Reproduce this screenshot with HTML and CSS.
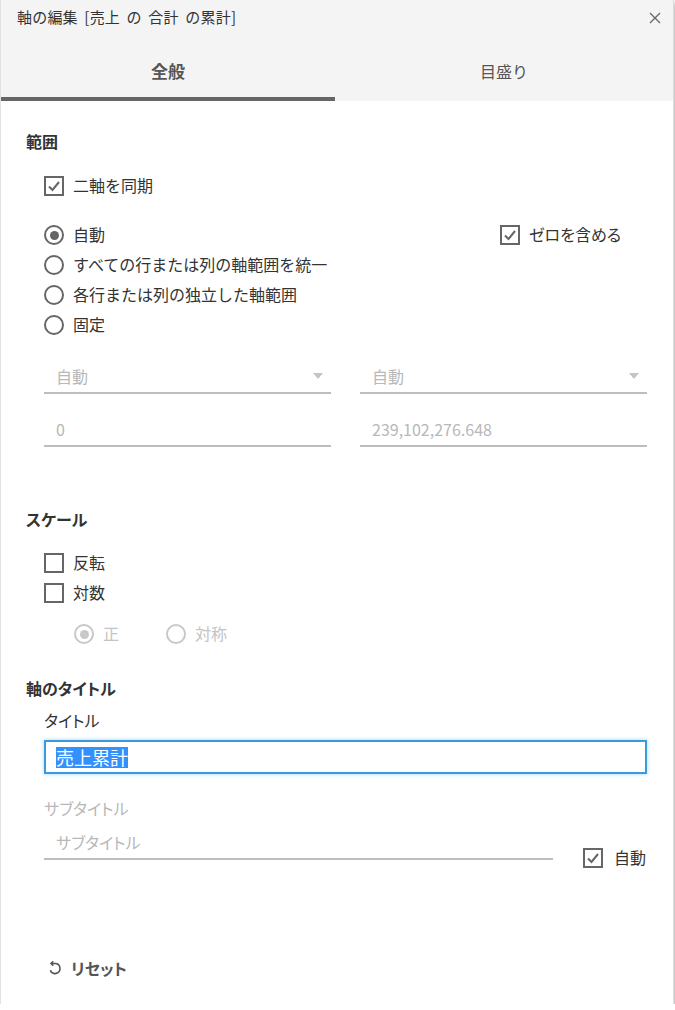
FILE: index.html
```html
<!DOCTYPE html>
<html lang="ja">
<head>
<meta charset="UTF-8">
<meta name="viewport" content="width=device-width, initial-scale=1.0">
<link rel="stylesheet" href="styles.css">
<title>軸の編集</title>
</head>
<body>
<div class="dialog">
    <div class="head">
        <div class="titlebar">
            <span class="title">軸の編集 [売上 の 合計 の累計]</span>
            <svg class="close" width="12" height="12" viewBox="0 0 12 12"><path d="M1 1L11 11M11 1L1 11" stroke="#666" stroke-width="1.3" fill="none"/></svg>
        </div>
        <div class="tabs">
            <div class="tab active">全般</div>
            <div class="tab">目盛り</div>
        </div>
    </div>

    <div class="body">
        <h2 class="heading">範囲</h2>
        <div class="opt indent sync">
            <span class="box checked"><svg width="16" height="16" viewBox="0 0 16 16"><polyline points="3,8.5 6.5,12 13,4" stroke="#666" stroke-width="2" fill="none"/></svg></span>
            <span>二軸を同期</span>
        </div>

        <div class="range-grid indent">
            <div class="radios">
                <div class="opt"><span class="radio on"></span><span>自動</span></div>
                <div class="opt"><span class="radio"></span><span>すべての行または列の軸範囲を統一</span></div>
                <div class="opt"><span class="radio"></span><span>各行または列の独立した軸範囲</span></div>
                <div class="opt"><span class="radio"></span><span>固定</span></div>
            </div>
            <div class="opt">
                <span class="box checked"><svg width="16" height="16" viewBox="0 0 16 16"><polyline points="3,8.5 6.5,12 13,4" stroke="#666" stroke-width="2" fill="none"/></svg></span>
                <span class="kana">ゼロを含める</span>
            </div>
        </div>

        <div class="fields indent">
            <div class="field select"><span>自動</span><span class="arrow"></span></div>
            <div class="field select"><span>自動</span><span class="arrow"></span></div>
            <div class="field"><span>0</span></div>
            <div class="field"><span>239,102,276.648</span></div>
        </div>

        <h2 class="heading scale-head kana">スケール</h2>
        <div class="opt indent first"><span class="box"></span><span>反転</span></div>
        <div class="opt indent"><span class="box"></span><span>対数</span></div>
        <div class="sub-radios">
            <div class="opt disabled"><span class="radio on"></span><span>正</span></div>
            <div class="opt disabled"><span class="radio"></span><span>対称</span></div>
        </div>

        <h2 class="heading title-head kana">軸のタイトル</h2>
        <div class="label indent kana">タイトル</div>
        <div class="text-box indent"><span class="selected">売上累計</span></div>
        <div class="label indent muted sub-label kana">サブタイトル</div>
        <div class="sub-row indent">
            <div class="field"><span class="kana">サブタイトル</span></div>
            <div class="opt">
                <span class="box checked"><svg width="16" height="16" viewBox="0 0 16 16"><polyline points="3,8.5 6.5,12 13,4" stroke="#666" stroke-width="2" fill="none"/></svg></span>
                <span>自動</span>
            </div>
        </div>

        <div class="reset">
            <svg width="14" height="16" viewBox="0 0 14 16"><path d="M3.2 3.5H7A5 5 0 1 1 2.3 10.3" stroke="#555" stroke-width="1.6" fill="none"/><polyline points="5.3,1.3 3,3.5 5.3,5.7" stroke="#555" stroke-width="1.6" fill="none"/></svg>
            <span class="kana">リセット</span>
        </div>
    </div>
</div>
</body>
</html>
```

FILE: styles.css
```css
body {
    margin: 0;
    font-family: "Noto Sans CJK JP", "Noto Sans", sans-serif;
    color: #333;
    background: #fff;
}

.dialog {
    width: 674px;
    height: 1004px;
    box-sizing: border-box;
    border-left: 1px solid #e2e2e2;
    border-right: 1px solid #dcdcdc;
    box-shadow: 0 3px 4px rgba(0, 0, 0, 0.5);
    background: #fff;
    position: relative;
}

.kana {
    font-feature-settings: "palt";
}

.head {
    background: #f4f4f4;
}

.titlebar {
    height: 36px;
    display: flex;
    align-items: center;
    justify-content: space-between;
    padding: 0 12px 0 16px;
}

.title {
    font-size: 15px;
    line-height: 20px;
    margin-top: -2px;
    word-spacing: 3px;
    letter-spacing: 0.2px;
}

.tabs {
    display: flex;
    height: 65px;
}

.tab {
    flex: 1;
    text-align: center;
    padding-top: 25px;
    line-height: 20px;
    font-size: 16px;
    color: #555;
    box-sizing: border-box;
}

.tab.active {
    flex: 0 0 334px;
    font-weight: bold;
    font-size: 17px;
    border-bottom: 4px solid #666;
}

.body {
    padding: 30px 26px 0 25px;
}

.heading {
    margin: 0;
    font-size: 16px;
    line-height: 20px;
    font-weight: bold;
    color: #333;
}

.indent {
    margin-left: 18px;
}

.opt {
    display: flex;
    align-items: center;
    height: 30px;
    gap: 9px;
    font-size: 16px;
}

.opt > span:not(.box):not(.radio) {
    margin-top: -2px;
}

.box {
    width: 20px;
    height: 20px;
    box-sizing: border-box;
    border: 2px solid #666;
    display: flex;
    align-items: center;
    justify-content: center;
    flex: none;
}

.radio {
    width: 20px;
    height: 20px;
    box-sizing: border-box;
    border: 2px solid #666;
    border-radius: 50%;
    display: flex;
    align-items: center;
    justify-content: center;
    flex: none;
}

.radio.on::after {
    content: "";
    width: 9px;
    height: 9px;
    border-radius: 50%;
    background: #666;
}

.sync {
    margin-top: 20px;
}

.range-grid {
    display: flex;
    margin-top: 19px;
}

.radios {
    width: 456px;
}

.fields {
    display: grid;
    grid-template-columns: 1fr 1fr;
    column-gap: 29px;
    row-gap: 21px;
    margin-top: 22px;
}

.field {
    height: 32px;
    box-sizing: border-box;
    border-bottom: 2px solid #bdbdbd;
    padding: 0 8px 2px 12px;
    display: flex;
    align-items: center;
    justify-content: space-between;
    font-size: 16px;
    color: #b8b8b8;
}

.arrow {
    width: 0;
    height: 0;
    border-left: 5px solid transparent;
    border-right: 5px solid transparent;
    border-top: 6px solid #c4c4c4;
}

.scale-head {
    margin-top: 62px;
}

.first {
    margin-top: 19px;
}

.sub-radios {
    display: flex;
    gap: 47px;
    margin: 11px 0 0 48px;
}

.disabled {
    color: #c4c4c4;
}

.disabled .radio {
    border-color: #c8c8c8;
}

.disabled .radio.on::after {
    background: #c8c8c8;
}

.title-head {
    margin-top: 29px;
}

.label {
    margin-top: 12px;
    font-size: 16px;
    line-height: 20px;
}

.muted {
    color: #b8b8b8;
}

.sub-label {
    margin-top: 24px;
}

.text-box {
    margin-top: 10px;
    height: 34px;
    box-sizing: border-box;
    border: 2px solid #3a9ae0;
    box-shadow: 0 0 4px rgba(58, 154, 224, 0.45);
    padding-left: 10px;
    display: flex;
    align-items: center;
    font-size: 18px;
}

.selected {
    background: #3390ff;
    color: #fff;
    line-height: 21px;
}

.sub-row {
    display: flex;
    align-items: flex-end;
    gap: 30px;
    margin-top: 10px;
}

.sub-row .field {
    flex: 1;
}

.sub-row .opt {
    height: 20px;
    gap: 11px;
    padding-right: 1px;
    margin-bottom: -8px;
}

.reset {
    display: flex;
    align-items: center;
    gap: 9px;
    margin: 98px 0 0 22px;
    height: 20px;
    font-size: 16px;
    font-weight: bold;
    color: #555;
}
```
